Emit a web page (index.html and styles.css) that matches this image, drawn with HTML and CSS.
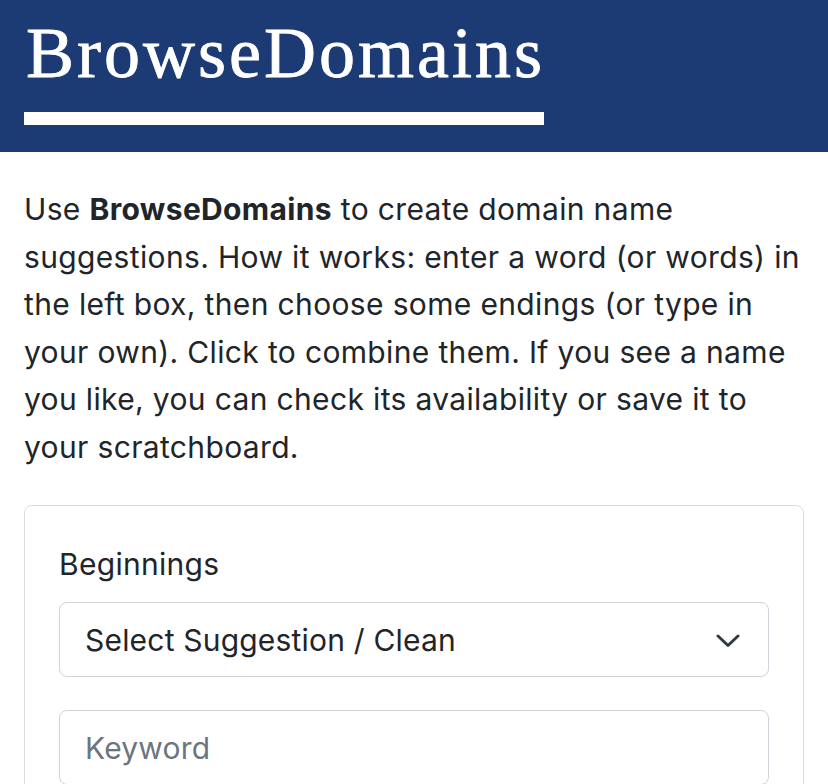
FILE: index.html
```html
<!DOCTYPE html>
<html lang="en">
<head>
<meta charset="utf-8">
<title>BrowseDomains</title>
<link rel="stylesheet" href="styles.css">
</head>
<body>
<header class="site-header">
  <h1 class="brand">BrowseDomains</h1>
  <div class="brand-bar"></div>
</header>
<main class="content">
  <p class="intro">Use <strong>BrowseDomains</strong> to create domain name suggestions. How it works: enter a word (or words) in the left box, then choose some endings (or type in your own). Click to combine them. If you see a name you like, you can check its availability or save it to your scratchboard.</p>
  <section class="card">
    <label class="field-label" for="beginnings">Beginnings</label>
    <div class="select-wrap">
      <div class="select" id="beginnings">Select Suggestion / Clean</div>
      <svg class="chevron" width="24" height="14" viewBox="0 0 24 14"><path d="M2 2 L12 11.5 L22 2" fill="none" stroke="#343a40" stroke-width="3" stroke-linecap="round" stroke-linejoin="round"/></svg>
    </div>
    <div class="input"><span class="placeholder">Keyword</span></div>
  </section>
</main>
</body>
</html>
```

FILE: styles.css
```css
html, body {
  margin: 0;
  padding: 0;
  background: #ffffff;
}
body {
  font-family: Inter, "Liberation Sans", Arial, sans-serif;
  color: #212529;
  font-size: 30px;
  line-height: 47.6px;
}
.site-header {
  background: #1c3a73;
  padding: 17px 24px 27px;
}
.brand {
  margin: 0;
  font-family: "Liberation Serif", "Times New Roman", serif;
  font-weight: normal;
  font-size: 72px;
  line-height: 72px;
  letter-spacing: 3px;
  color: #ffffff;
  padding-left: 2px;
  -webkit-text-stroke: 0.8px #ffffff;
}
.brand-bar {
  margin-top: 23px;
  width: 520px;
  height: 13px;
  background: #ffffff;
}
.content {
  padding: 34px 24px 0;
}
.intro {
  margin: 0 0 33px;
  letter-spacing: 0.35px;
}
.intro strong {
  font-weight: 700;
}
.card {
  border: 1px solid #dcdcdc;
  border-radius: 8px;
  padding: 34px 34px 40px;
}
.field-label {
  display: block;
  line-height: 48px;
  margin-bottom: 14px;
  letter-spacing: 0.3px;
}
.select-wrap {
  position: relative;
}
.select, .input {
  height: 70px;
  padding: 3px 25px 0;
  border: 1px solid #ced4da;
  border-radius: 8px;
  display: flex;
  align-items: center;
  box-sizing: content-box;
  letter-spacing: 0.2px;
}
.select {
  color: #212529;
}
.chevron {
  position: absolute;
  right: 29px;
  top: 32px;
}
.input {
  margin-top: 33px;
}
.placeholder {
  color: #6c757d;
}
```
